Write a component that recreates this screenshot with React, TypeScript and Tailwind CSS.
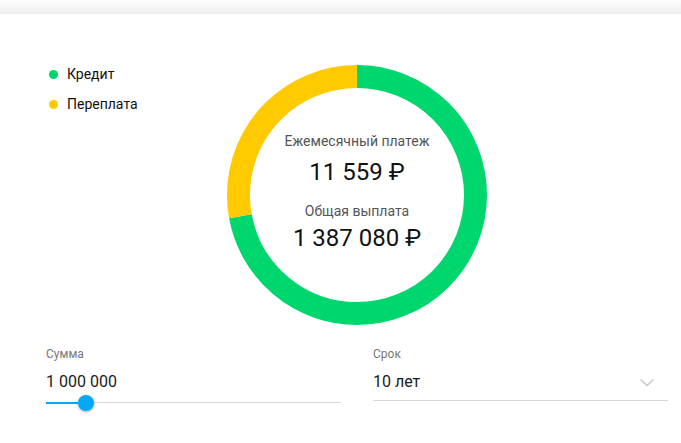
import React from "react";

const R = 118.5;
const C = 2 * Math.PI * R;
const greenFrac = 1000000 / 1387080;

function Donut() {
  const g = C * greenFrac;
  const y = C - g;
  return (
    <div className="relative w-[260px] h-[262px]">
      <svg width="260" height="262" viewBox="0 0 260 262" className="block">
        <g transform="rotate(-90 130 131)">
          <circle cx="130" cy="131" r={R} fill="none" stroke="#00d66e" strokeWidth="23" strokeDasharray={`${g} ${C}`} />
          <circle cx="130" cy="131" r={R} fill="none" stroke="#ffca00" strokeWidth="23" strokeDasharray={`${y} ${C}`} strokeDashoffset={-g} />
        </g>
      </svg>
      <div className="absolute inset-0 flex flex-col items-center pt-[67px] text-center">
        <div className="text-[14px] leading-[20px] text-[#555555]">Ежемесячный платеж</div>
        <div className="mt-[7px] text-[24px] leading-[28px] text-[#111111]">11 559 ₽</div>
        <div className="mt-[15px] text-[14px] leading-[20px] text-[#555555]">Общая выплата</div>
        <div className="mt-[3px] text-[24px] leading-[28px] text-[#111111]">1 387 080 ₽</div>
      </div>
    </div>
  );
}

export default function App() {
  return (
    <div className="w-[681px] h-[443px] bg-white overflow-hidden" style={{ fontFamily: "Roboto, 'Liberation Sans', sans-serif" }}>
      <div className="h-[14px] bg-gradient-to-b from-[#fdfdfd] to-[#eeeeee]" />
      <div className="pl-[46px] pr-[13px]">
        <div className="mt-[50px] grid grid-cols-[1fr_auto_1fr]">
          <div className="ml-[3px] flex flex-col gap-[10px]">
            <div className="flex items-center h-[20px]">
              <span className="w-[9px] h-[9px] rounded-full bg-[#00d66e]" />
              <span className="ml-[9px] text-[14px] text-[#111111]">Кредит</span>
            </div>
            <div className="flex items-center h-[20px]">
              <span className="w-[9px] h-[9px] rounded-full bg-[#ffca00]" />
              <span className="ml-[9px] text-[14px] text-[#111111]">Переплата</span>
            </div>
          </div>
          <Donut />
          <div />
        </div>
        <div className="mt-[20px] grid grid-cols-2 gap-[32px]">
          <div>
            <div className="text-[12px] leading-[16px] text-[#777777]">Сумма</div>
            <div className="mt-[8px] text-[16px] leading-[24px] text-[#1a1a1a]">1 000 000</div>
            <div className="relative mt-[8px] h-[1px] bg-[#d7d7df]">
              <div className="absolute left-0 top-[-0.5px] h-[2px] w-[40px] bg-[#03a9f4]" />
              <div className="absolute left-[32px] top-[-7px] w-[16px] h-[16px] rounded-full bg-[#03a9f4] shadow-[0_1px_3px_rgba(0,0,0,0.3)]" />
            </div>
          </div>
          <div>
            <div className="text-[12px] leading-[16px] text-[#777777]">Срок</div>
            <div className="mt-[8px] flex items-center justify-between border-b border-[#d7d7df] pb-[6px]">
              <span className="text-[16px] leading-[24px] text-[#1a1a1a]">10 лет</span>
              <svg width="16" height="9" viewBox="0 0 16 9" className="mr-[13px]">
                <path d="M1.5 1.5 L8 7.5 L14.5 1.5" fill="none" stroke="#c5c5cf" strokeWidth="1.5" />
              </svg>
            </div>
          </div>
        </div>
      </div>
    </div>
  );
}
